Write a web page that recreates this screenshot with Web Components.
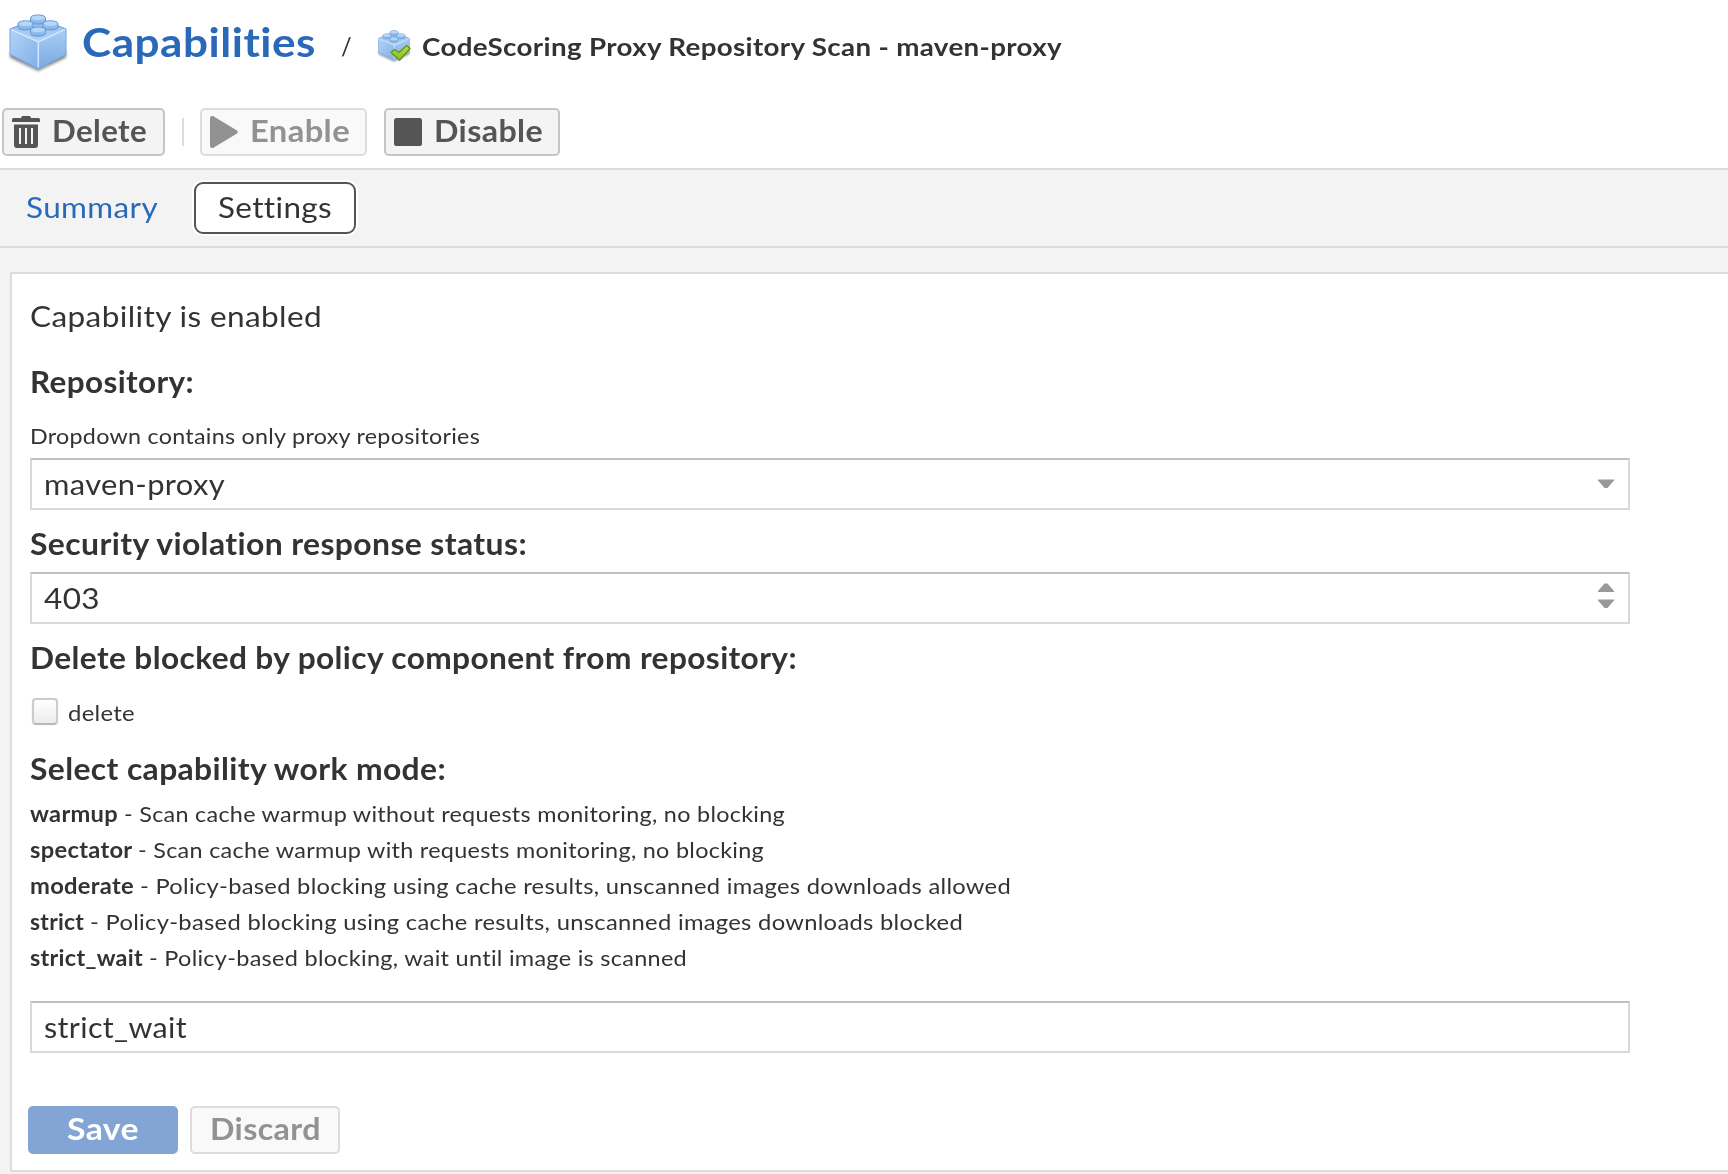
<!DOCTYPE html>
<html lang="en">
<head>
<meta charset="utf-8">
<title>Capabilities</title>
<style>
html,body{margin:0;padding:0;height:1174px;overflow:hidden;background:#f3f3f3;font-family:Lato,"Open Sans","Liberation Sans",sans-serif;color:#333}
</style>
</head>
<body>
<capability-page></capability-page>
<script>
const define=(name,html,init)=>customElements.define(name,class extends HTMLElement{
  connectedCallback(){
    if(this.shadowRoot)return;
    this.attachShadow({mode:'open'}).innerHTML=html;
    if(init)init(this,this.shadowRoot);
  }
});

/* A run of text widened to a given advance width (w), at a given size (s). */
define('ui-text',`<style>
:host{display:block;line-height:36px;height:36px;white-space:nowrap;font-size:29.5px;flex:none}
:host([bold]){font-weight:700}
:host([bold]:not([small]):not([s])){line-height:38px}
:host([small]){font-size:22px}
span{display:inline-block;white-space:pre;transform-origin:0 0;font-variant-ligatures:none;letter-spacing:.012em}
</style><span><slot></slot></span>`,(el,root)=>{
  const s=el.getAttribute('s');
  if(s)el.style.fontSize=s+'px';
  const w=+el.getAttribute('w');
  if(!w)return;
  const span=root.querySelector('span');
  const natural=span.getBoundingClientRect().width;
  el.style.width=w+'px';
  span.style.transform='scaleX('+(w/natural).toFixed(4)+')';
});

define('brick-icon',`<style>
:host{display:block;flex:none}svg{display:block;width:100%;height:100%;overflow:visible}
.ok{display:none}:host([ok]) .ok{display:block}
</style>
<svg viewBox="3 5 58 58" preserveAspectRatio="none">
<defs>
<linearGradient id="l" x1="0" y1="0" x2="1" y2="1"><stop offset="0" stop-color="#b3d3f6"/><stop offset="1" stop-color="#7fb0e8"/></linearGradient>
<linearGradient id="r" x1="0" y1="0" x2="0" y2="1"><stop offset="0" stop-color="#a9cdf5"/><stop offset="1" stop-color="#7aaae2"/></linearGradient>
<linearGradient id="t" x1="0" y1="0" x2="0" y2="1"><stop offset="0" stop-color="#8fbcec"/><stop offset="1" stop-color="#b4d4f6"/></linearGradient>
<linearGradient id="s" x1="0" y1="0" x2="0" y2="1"><stop offset="0" stop-color="#b5d6f8"/><stop offset="1" stop-color="#7daee6"/></linearGradient>
<linearGradient id="g" x1="0" y1="0" x2="0" y2="1"><stop offset="0" stop-color="#b9e04a"/><stop offset="1" stop-color="#86bd1b"/></linearGradient>
<filter id="b" x="-20%" y="-20%" width="140%" height="150%"><feGaussianBlur stdDeviation="1.5"/></filter>
</defs>
<path d="M4 45 32 61 60 45 60 50 32 64 4 50Z" fill="#000" opacity=".5" filter="url(#b)"/>
<path d="M4 20.500 32 9 60 20.500V47L32.300 62 4 47Z" fill="#82b1e7" stroke="#6d9fd9" stroke-width="1"/>
<path d="M4.500 21 32 9.500 59.500 21 32.300 34Z" fill="url(#t)"/>
<path d="M4.500 21 32.300 34V61L4.500 46.500Z" fill="url(#l)"/>
<path d="M32.300 34 59.500 21V46.500L32.300 61Z" fill="url(#r)"/>
<path d="M5 21 32.300 34 59 21M32.300 34V60.500" fill="none" stroke="#d5e8fc" stroke-width="1.500"/>
<g fill="url(#s)" stroke="#6397d4" stroke-width="1">
<path d="M24.500 9c0-4 15-4 15 0v3.500c0 4-15 4-15 0Z"/>
<path d="M12 15c0-4 15-4 15 0v3.500c0 4-15 4-15 0Z"/>
<path d="M37 15c0-4 15-4 15 0v3.500c0 4-15 4-15 0Z"/>
<path d="M24.500 21.500c0-4 15-4 15 0v3.500c0 4-15 4-15 0Z"/>
</g>
<g fill="#b6d7f9"><ellipse cx="32" cy="9" rx="6.500" ry="2.200"/><ellipse cx="19.500" cy="15" rx="6.500" ry="2.200"/><ellipse cx="44.500" cy="15" rx="6.500" ry="2.200"/><ellipse cx="32" cy="21.500" rx="6.500" ry="2.200"/></g>
<path class="ok" d="M27 47 33 41.500 41 47 55 34 61 39.500 42 61.500Z" fill="url(#g)" stroke="#63961a" stroke-width="2.500" stroke-linejoin="round"/>
</svg>`);

define('tool-button',`<style>
:host{display:flex;box-sizing:border-box;height:48px;border:2px solid #c5c5c5;border-radius:5px;background:#f4f4f4;color:#555;align-items:flex-start;padding:2px 0 0 8px;flex:none}
:host([disabled]){border-color:#dcdcdc;background:#f9f9f9;color:#929292}
:host([plain]){justify-content:center;padding-left:0}
:host([primary]){border-color:#82a5d6;background:#82a5d6;color:#fff}
::slotted(svg){width:28px;height:32px;margin:4px 12px 0 0;fill:currentColor;flex:none}
</style><slot name="icon"></slot><slot></slot>`,el=>{el.style.width=el.getAttribute('width')+'px';});

define('text-field',`<style>
:host{display:flex;box-sizing:border-box;width:1600px;height:52px;border:2px solid #d9d9d9;border-top-color:#c0c0c0;background:#fff;padding:6px 14px 0 12px;justify-content:space-between}
svg{width:18px;height:36px;fill:#999;display:none;margin-right:-1px}
:host([kind=combo]) .c,:host([kind=spin]) .s{display:block}
</style><slot></slot>
<svg class="c" viewBox="0 0 18 36"><path d="M1 13.500h16v1l-6.500 7.500h-3l-6.500-7.500Z"/></svg>
<svg class="s" viewBox="0 0 18 36"><path d="M1 12h16v-1l-6.500-7.500h-3l-6.500 7.500ZM1 19.500h16v1l-6.500 7.500h-3l-6.500-7.500Z"/></svg>`);

define('check-box',`<style>
:host{display:flex;height:36px}
i{box-sizing:border-box;width:26px;height:27px;margin:3px 10px 0 2px;border:2px solid #ccc;border-bottom-color:#b9b9b9;border-radius:4px;background:linear-gradient(#fff,#ececec);box-shadow:0 0 1px #ccc}
</style><i></i><slot></slot>`);

define('page-header',`<style>
:host{display:block;background:#fff;border-bottom:2px solid #dcdcdc;height:168px}
.title{display:flex;height:108px;color:#333}
.name{color:#2a69ba;margin:24px 0 0 15px}
.bar{display:flex;padding-left:2px}
.sep{width:2px;height:28px;background:#dcdcdc;margin:10px 16px 0 17px}
.big{width:58px;height:56px;margin:14px 0 0 9px}
.sm{width:32px;height:31px;margin:30px 0 0 26px}
</style>
<div class="title">
<brick-icon class="big"></brick-icon>
<ui-text class="name" bold s="40" w="234">Capabilities</ui-text>
<ui-text s="25" style="margin:28px 0 0 25px" w="11">/</ui-text>
<brick-icon class="sm" ok></brick-icon>
<ui-text bold s="25.5" w="640" style="margin:28px 0 0 12px">CodeScoring Proxy Repository Scan - maven-proxy</ui-text>
</div>
<div class="bar">
<tool-button width="163"><svg slot="icon" viewBox="0 0 28 32"><path fill-rule="evenodd" d="M0 3.500Q0 2 1.500 2H9L10 0h8l1 2h7.500Q28 2 28 3.500V6H0ZM2 8.500H26V29q0 3-3 3H5q-3 0-3-3ZM7 12v16h2V12Zm6 0v16h2V12Zm6 0v16h2V12Z"/></svg><ui-text bold w="95">Delete</ui-text></tool-button>
<div class="sep"></div>
<tool-button width="167" disabled><svg slot="icon" viewBox="0 0 28 32"><path d="M0 1.500Q0 0 2 0h1L27 14.500q1.500 1.500 0 3L3 32H2q-2 0-2-2Z"/></svg><ui-text bold w="100">Enable</ui-text></tool-button>
<tool-button width="176" style="margin-left:17px"><svg slot="icon" viewBox="0 0 28 32"><rect y="2" width="28" height="28" rx="2.500"/></svg><ui-text bold w="109">Disable</ui-text></tool-button>
</div>`);

define('tab-bar',`<style>
:host{display:flex;height:76px;border-bottom:2px solid #dcdcdc;background:#f3f3f3}
.a{color:#2a69ba;margin:19px 0 0 26px}
.b{box-sizing:border-box;width:162px;height:52px;margin:12px 0 0 36px;border:2px solid #555;border-radius:9px;background:#fff;box-shadow:0 0 0 2px #fff;padding:5px 0 0 22px}
</style><ui-text class="a" w="132">Summary</ui-text><div class="b"><ui-text w="114">Settings</ui-text></div>`);

define('mode-line',`<style>:host{display:flex;height:36px}</style><slot></slot>`);

define('settings-card',`<style>
:host{display:flex;flex-direction:column;box-sizing:border-box;width:1730px;height:900px;margin:24px 0 0 10px;border:2px solid #dcdcdc;background:#fff;padding:24px 0 0 18px}
.btns{display:flex;gap:12px;margin:53px 0 0 -2px}
</style>
<ui-text w="292">Capability is enabled</ui-text>
<ui-text bold w="164" style="margin-top:29px">Repository:</ui-text>
<ui-text small w="450" style="margin-top:19px">Dropdown contains only proxy repositories</ui-text>
<text-field kind="combo" style="margin-top:4px"><ui-text w="181">maven-proxy</ui-text></text-field>
<ui-text bold w="497" style="margin-top:15px">Security violation response status:</ui-text>
<text-field kind="spin" style="margin-top:11px"><ui-text w="56">403</ui-text></text-field>
<ui-text bold w="767" style="margin-top:15px">Delete blocked by policy component from repository:</ui-text>
<check-box style="margin-top:20px"><ui-text small w="67">delete</ui-text></check-box>
<ui-text bold w="416" style="margin-top:19px">Select capability work mode:</ui-text>
<div style="margin-top:10px">
<mode-line><ui-text small bold w="94">warmup </ui-text><ui-text small w="661">- Scan cache warmup without requests monitoring, no blocking</ui-text></mode-line>
<mode-line><ui-text small bold w="108">spectator </ui-text><ui-text small w="626">- Scan cache warmup with requests monitoring, no blocking</ui-text></mode-line>
<mode-line><ui-text small bold w="110">moderate </ui-text><ui-text small w="871">- Policy-based blocking using cache results, unscanned images downloads allowed</ui-text></mode-line>
<mode-line><ui-text small bold w="60">strict </ui-text><ui-text small w="873">- Policy-based blocking using cache results, unscanned images downloads blocked</ui-text></mode-line>
<mode-line><ui-text small bold w="119">strict_wait </ui-text><ui-text small w="538">- Policy-based blocking, wait until image is scanned</ui-text></mode-line>
</div>
<text-field style="margin-top:25px"><ui-text w="143">strict_wait</ui-text></text-field>
<div class="btns"><tool-button width="150" primary plain><ui-text bold w="72">Save</ui-text></tool-button><tool-button width="150" plain disabled><ui-text bold w="111">Discard</ui-text></tool-button></div>`);

define('capability-page',`<style>:host{display:block;width:1728px;height:1174px;overflow:hidden}</style>
<page-header></page-header><tab-bar></tab-bar><settings-card></settings-card>`);
</script>
</body>
</html>
